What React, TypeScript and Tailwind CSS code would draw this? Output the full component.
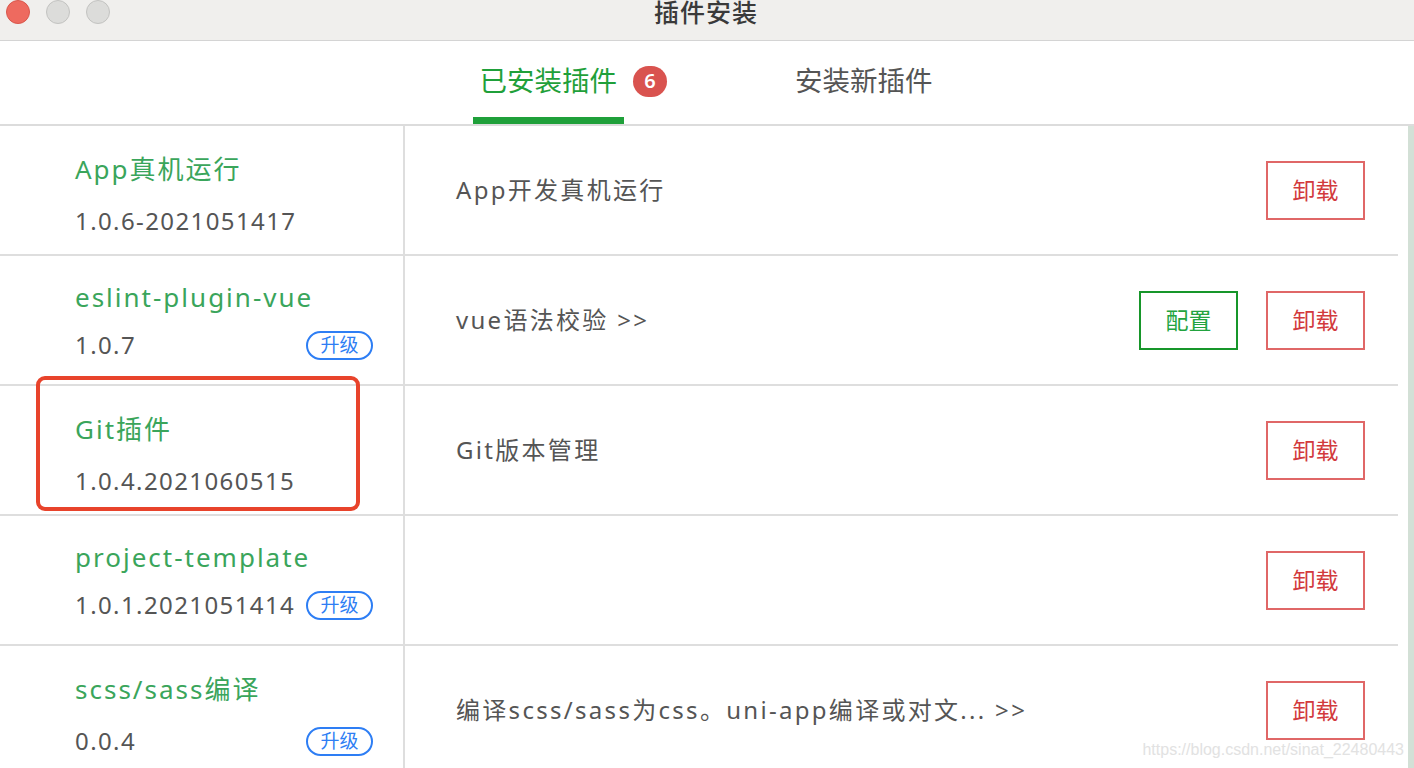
import React from "react";

type Row = {
  name: string;
  version: string;
  upgrade?: boolean;
  desc: string;
  config?: boolean;
};

const rows: Row[] = [
  { name: "App真机运行", version: "1.0.6-2021051417", desc: "App开发真机运行" },
  { name: "eslint-plugin-vue", version: "1.0.7", upgrade: true, desc: "vue语法校验 >>", config: true },
  { name: "Git插件", version: "1.0.4.2021060515", desc: "Git版本管理" },
  { name: "project-template", version: "1.0.1.2021051414", upgrade: true, desc: "" },
  { name: "scss/sass编译", version: "0.0.4", upgrade: true, desc: "编译scss/sass为css。uni-app编译或对文... >>" },
];

const font = {
  fontFamily: '"Noto Sans", "Noto Sans CJK SC", sans-serif',
};

export default function App() {
  return (
    <div className="relative w-[1414px] h-[768px] overflow-hidden bg-white" style={font}>
      {/* Title bar */}
      <div className="grid grid-cols-[1fr_auto_1fr] h-[41px] bg-[#f0efed] border-b border-[#d4d4d4]">
        <div className="flex items-start gap-[16px] pl-[6px]">
          <div className="w-[24px] h-[24px] rounded-full bg-[#ee6a5f] border border-[#d9574c]" />
          <div className="w-[24px] h-[24px] rounded-full bg-[#dcdcda] border border-[#c3c3c1]" />
          <div className="w-[24px] h-[24px] rounded-full bg-[#dcdcda] border border-[#c3c3c1]" />
        </div>
        <div className="text-[25px] leading-[24px] text-[#3a3a3a] font-medium tracking-[1px] pr-[2px]">插件安装</div>
        <div />
      </div>

      {/* Tabs */}
      <div className="flex justify-center pr-[9px] h-[85px] border-b-2 border-[#dcdcdc]">
        <div className="flex items-center h-full px-[7px] border-b-[7px] border-[#1fa03a] text-[27.5px] text-[#1fa03a] pt-[4px]">
          已安装插件
        </div>
        <div className="flex items-center h-full pb-[3px]">
          <div className="ml-[9px] w-[34px] h-[31px] rounded-full bg-[#d9534f] text-white text-[20px] font-semibold flex items-center justify-center leading-none">
            6
          </div>
        </div>
        <div className="ml-[128px] flex items-center h-full pb-[3px] text-[27.5px] text-[#555555]">
          安装新插件
        </div>
      </div>

      {/* Table */}
      <div className="flex">
        <div className="w-[1398px]">
          {rows.map((r, i) => (
            <div key={i} className="flex h-[130px] border-b-2 border-[#dedede]">
              <div
                className={`w-[405px] shrink-0 border-r-2 border-[#dedede] pl-[75px] pr-[30px] ${
                  i % 2 === 1 ? "pt-[23px]" : "pt-[25px]"
                }`}
              >
                <div className="text-[26px] leading-[36px] text-[#3aa55b] tracking-[2px]">{r.name}</div>
                <div
                  className={`flex items-center justify-between h-[32px] ${
                    i % 2 === 1 ? "mt-[14px]" : "mt-[18px]"
                  }`}
                >
                  <span className="text-[24px] leading-[32px] text-[#555555] tracking-[1.4px]">{r.version}</span>
                  {r.upgrade && (
                    <span className="w-[67px] h-[29px] rounded-full border-2 border-[#2e7ef4] text-[#2e7ef4] text-[19px] leading-none flex items-center justify-center">
                      升级
                    </span>
                  )}
                </div>
              </div>
              <div className="flex-1 flex items-center justify-between pl-[51px] pr-[33px]">
                <span className="text-[24px] text-[#555555] tracking-[2.3px]">{r.desc}</span>
                <div className="flex items-center gap-[28px]">
                  {r.config && (
                    <button className="w-[99px] h-[59px] border-2 border-[#17962a] text-[23px] text-[#22a33f] flex items-center justify-center">
                      配置
                    </button>
                  )}
                  <button className="w-[99px] h-[59px] border-2 border-[#e06767] text-[23px] text-[#d23a3d] flex items-center justify-center">
                    卸载
                  </button>
                </div>
              </div>
            </div>
          ))}
        </div>
        <div className="ml-[10px] w-[6px] bg-[#d3e0d6]" />
      </div>

      {/* Highlight box */}
      <div className="absolute left-[36px] top-[376px] w-[324px] h-[135px] border-4 border-[#e8432b] rounded-[9px]" />

      {/* Watermark */}
      <div
        className="absolute right-[10px] top-[738px] text-[16px] text-[#e2e2e2]"
        style={{ fontFamily: '"Liberation Sans", Arial, sans-serif' }}
      >
        https://blog.csdn.net/sinat_22480443
      </div>
    </div>
  );
}
